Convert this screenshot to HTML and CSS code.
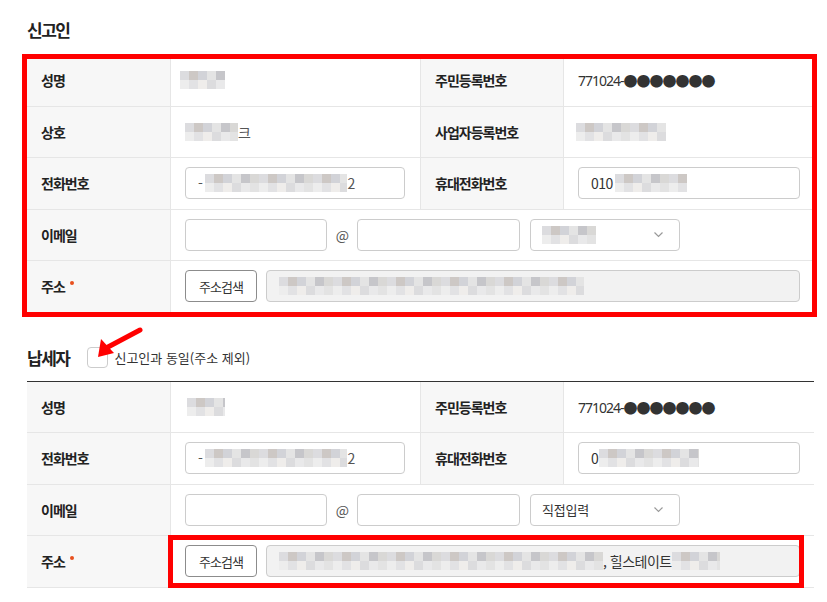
FILE: index.html
```html
<!DOCTYPE html>
<html lang="ko">
  <head>
    <meta charset="UTF-8" />
    <meta name="viewport" content="width=device-width, initial-scale=1.0" />
    <title>신고인 / 납세자</title>
    <link rel="stylesheet" href="styles.css">
  </head>
  <body>
    <div class="page">
      <!-- 신고인 -->
      <h2 class="sec-title first">신고인</h2>
      <div class="marked">
        <div class="form-grid">
          <div class="th">성명</div>
          <div class="td"><span class="mosaic m-name"></span></div>
          <div class="th col3">주민등록번호</div>
          <div class="td"><span class="rrn">771024-●●●●●●●</span></div>

          <div class="th">상호</div>
          <div class="td"><span class="mosaic m-shop"></span><span class="tail">크</span></div>
          <div class="th col3">사업자등록번호</div>
          <div class="td"><span class="mosaic m-biz"></span></div>

          <div class="th">전화번호</div>
          <div class="td"><div class="field phone">- <span class="mosaic m-tel"></span>2</div></div>
          <div class="th col3">휴대전화번호</div>
          <div class="td"><div class="field mobile">010<span class="mosaic m-mob"></span></div></div>

          <div class="th">이메일</div>
          <div class="td span3">
            <input class="inp mail-id" type="text" />
            <span class="at">@</span>
            <input class="inp mail-host" type="text" />
            <div class="select"><span class="mosaic m-sel"></span><svg class="chev" width="9" height="6" viewBox="0 0 9 6"><polyline points="0.5,0.5 4.5,4.5 8.5,0.5" fill="none" stroke="#999" stroke-width="1.2"/></svg></div>
          </div>

          <div class="th">주소<span class="req"></span></div>
          <div class="td span3 last">
            <button class="btn-search">주소검색</button>
            <div class="field addr"><span class="mosaic m-addr"></span></div>
          </div>
        </div>
        <div class="mark mark-top"></div>
      </div>

      <!-- 납세자 -->
      <div class="sec-head">
        <h2 class="sec-title">납세자</h2>
        <label class="same"><span class="box"></span>신고인과 동일(주소 제외)</label>
        <svg class="arrow" width="60" height="50" viewBox="0 0 60 50">
          <line x1="50" y1="10" x2="18" y2="27" stroke="#f00" stroke-width="5" stroke-linecap="round"/>
          <polygon points="8,37 11,19 24,33" fill="#f00"/>
        </svg>
      </div>
      <div class="marked second">
        <div class="form-grid">
          <div class="th">성명</div>
          <div class="td"><span class="mosaic m-name2"></span></div>
          <div class="th col3">주민등록번호</div>
          <div class="td"><span class="rrn">771024-●●●●●●●</span></div>

          <div class="th">전화번호</div>
          <div class="td"><div class="field phone">- <span class="mosaic m-tel"></span>2</div></div>
          <div class="th col3">휴대전화번호</div>
          <div class="td"><div class="field mobile">0<span class="mosaic m-mob2"></span></div></div>

          <div class="th">이메일</div>
          <div class="td span3">
            <input class="inp mail-id" type="text" />
            <span class="at">@</span>
            <input class="inp mail-host" type="text" />
            <div class="select">직접입력<svg class="chev" width="9" height="6" viewBox="0 0 9 6"><polyline points="0.5,0.5 4.5,4.5 8.5,0.5" fill="none" stroke="#999" stroke-width="1.2"/></svg></div>
          </div>

          <div class="th">주소<span class="req"></span></div>
          <div class="td span3 last">
            <button class="btn-search">주소검색</button>
            <div class="field addr"><span class="mosaic m-addr2"></span>, 힐스테이트<span class="mosaic m-addr3"></span></div>
          </div>
        </div>
        <div class="mark mark-bottom"></div>
      </div>
    </div>
  </body>
</html>
```

FILE: styles.css
```css
* {
  box-sizing: border-box;
}

body {
  margin: 0;
  background-color: #fff;
  color: #333;
  font-family: "Noto Sans CJK KR", "Noto Sans", sans-serif;
}

.page {
  width: 814px;
  padding-left: 27px;
}

.sec-title {
  margin: 0;
  font-size: 17px;
  font-weight: 700;
  line-height: 24px;
  letter-spacing: -1.5px;
  color: #222;
}
.sec-title.first {
  padding-top: 18px;
}

.marked {
  position: relative;
  margin-top: 12px;
}
.marked.second {
  margin-top: 11px;
}

.form-grid {
  display: grid;
  grid-template-columns: 144px 249px 144px 1fr;
  grid-auto-rows: 51.5px;
  border-top: 1px solid #333;
}

.th {
  display: flex;
  align-items: center;
  padding-left: 14px;
  background-color: #f7f7f7;
  border-right: 1px solid #e6e6e6;
  border-bottom: 1px solid #e6e6e6;
  font-size: 14px;
  font-weight: 700;
  letter-spacing: -1px;
  color: #222;
}
.th.col3 {
  border-left: 1px solid #e6e6e6;
}

.td {
  display: flex;
  align-items: center;
  padding: 0 14px;
  border-bottom: 1px solid #e6e6e6;
  font-size: 14px;
  letter-spacing: -0.5px;
}
.td.span3 {
  grid-column: span 3;
}

.req {
  width: 4px;
  height: 4px;
  margin: -6px 0 0 5px;
  border-radius: 50%;
  background-color: #e8501e;
}

.rrn {
  font-family: "Noto Sans", "Noto Sans CJK KR", sans-serif;
  letter-spacing: -1px;
  color: #333;
}

/* pixelated (hidden) values */
.mosaic {
  display: inline-block;
  height: 18px;
  vertical-align: middle;
  background:
    repeating-linear-gradient(90deg, #dcdcdf 0 9px, #cdc8c5 9px 18px, #d2d3d8 18px 27px, #e4e4e4 27px 36px, #c6c6ca 36px 45px, #d9d8d6 45px 54px) top / 100% 50% no-repeat,
    repeating-linear-gradient(90deg, #ededed 0 9px, #e2e2e4 9px 18px, #efedeb 18px 27px, #dcdcde 27px 36px, #e9e9ea 36px 45px, #e3e3e3 45px 54px) bottom / 100% 50% no-repeat;
}
.m-name { width: 45px; margin-left: -5px; }
.m-name2 { width: 38px; margin-left: 2px; }
.m-shop { width: 53px; }
.m-biz { width: 90px; margin-left: -2px; }
.m-tel { width: 142px; margin: 0 0 0 3px; }
.m-mob { width: 72px; margin-left: 2px; }
.m-mob2 { width: 100px; margin-left: 1px; }
.m-sel { width: 54px; }
.m-addr { width: 305px; }
.m-addr2 { width: 324px; }
.m-addr3 { width: 48px; }

.tail {
  color: #555;
}

.field,
.inp,
.select {
  height: 32px;
  border: 1px solid #ccc;
  border-radius: 4px;
  background-color: #fff;
  font-family: inherit;
  font-size: 14px;
  color: #333;
}
.field {
  display: flex;
  align-items: center;
  padding: 0 12px;
}
.phone {
  width: 220px;
  color: #555;
}
.mobile {
  width: 222px;
}

.inp {
  padding: 0 10px;
}
.mail-id {
  width: 142px;
}
.mail-host {
  width: 163px;
}
.at {
  width: 30px;
  text-align: center;
  color: #555;
}

.select {
  display: flex;
  align-items: center;
  justify-content: space-between;
  width: 150px;
  margin-left: 10px;
  padding: 0 16px 0 11px;
  font-size: 13px;
  letter-spacing: -0.2px;
}

.btn-search {
  width: 72px;
  height: 32px;
  padding: 0;
  border: 1px solid #8c8c8c;
  border-radius: 4px;
  background-color: #fff;
  font-family: inherit;
  font-size: 13px;
  letter-spacing: -1px;
  color: #333;
}
.addr {
  flex: 1;
  margin-left: 9px;
  background-color: #f2f2f2;
  font-size: 14px;
}

.sec-head {
  position: relative;
  display: flex;
  align-items: center;
  height: 24px;
  margin-top: 33px;
}
.same {
  display: flex;
  align-items: center;
  margin-left: 18px;
  font-size: 13px;
  letter-spacing: 0;
  color: #333;
}
.box {
  width: 21px;
  height: 21px;
  margin-right: 6px;
  border: 1px solid #ccc;
  border-radius: 4px;
  background-color: #fff;
}
.arrow {
  position: absolute;
  left: 63px;
  top: -26px;
}

/* red annotation boxes */
.mark {
  position: absolute;
  border: 5px solid #f00;
}
.mark-top {
  top: 0;
  left: -5px;
  width: 795px;
  height: 263px;
}
.mark-bottom {
  top: 154px;
  left: 141px;
  width: 636px;
  height: 53px;
}
```
